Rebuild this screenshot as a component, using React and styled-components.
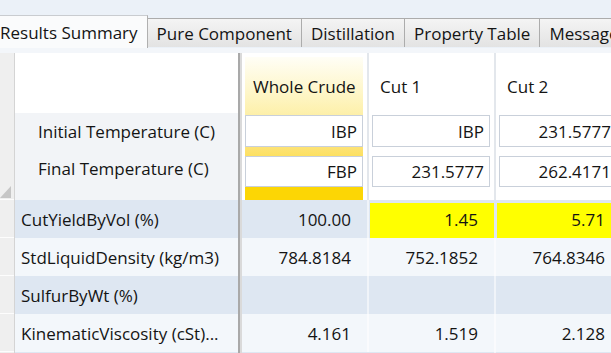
import styled, { createGlobalStyle, css } from "styled-components";

const GlobalStyle = createGlobalStyle`
  html, body {
    margin: 0;
    padding: 0;
    background: #ebf1f8;
    overflow: hidden;
  }
  body {
    font-family: "Open Sans", "Noto Sans", sans-serif;
    font-size: 17px;
    color: #141414;
  }
`;

const Page = styled.div`
  width: 611px;
  height: 353px;
  overflow: hidden;
  display: flex;
  flex-direction: column;
`;

const TabStrip = styled.div`
  display: flex;
  align-items: flex-end;
  height: 48px;
  margin-left: -9px;
  white-space: nowrap;
`;

const Tab = styled.div`
  height: 29px;
  padding: 0 9px;
  display: flex;
  align-items: center;
  box-sizing: border-box;
  border: 1px solid #acacac;
  border-bottom: none;
  border-left: none;
  background: linear-gradient(#f4f4f4, #e3e3e3);
  margin-bottom: 1px;
  ${(p) =>
    p.active &&
    css`
      height: 33px;
      margin-bottom: 0;
      background: #fafbfc;
      border-color: #c9ccd0;
      border-right-color: #b0b0b0;
    `}
`;

const Gap = styled.div`
  height: 5px;
  background: #f3f6fa;
`;

const Grid = styled.div`
  flex: 1;
  display: flex;
  flex-direction: column;
  overflow: hidden;
`;

const Row = styled.div`
  display: flex;
  height: ${(p) => p.h}px;
  flex-shrink: 0;
  background: ${(p) => p.bg};
`;

const RowHead = styled.div`
  width: 14px;
  flex-shrink: 0;
  background: #efefef;
  border-right: 1px solid #d4d4d4;
  box-shadow: inset 0 -1px 0 #fdfdfd;
  position: relative;
`;

const Corner = styled.div`
  position: absolute;
  right: 3px;
  bottom: 2px;
  width: 0;
  height: 0;
  border-left: 11px solid transparent;
  border-bottom: 12px solid #c6c6c6;
`;

const NameCol = styled.div`
  width: 223px;
  flex-shrink: 0;
  display: flex;
  flex-direction: column;
  background: #f2f4f7;
`;

const NameHead = styled.div`
  height: 60px;
  background: #ffffff;
`;

const TempLabel = styled.div`
  height: 37px;
  display: flex;
  align-items: center;
  padding-left: 23px;
  white-space: nowrap;
`;

const Splitter = styled.div`
  width: 4px;
  flex-shrink: 0;
  background: linear-gradient(to right, #a9a9a9 0 2px, #dadada 2px 4px);
`;

const ValueCol = styled.div`
  width: 118px;
  flex-shrink: 0;
  border-right: 2px solid #e3e7ec;
  background: #ffffff;
  padding: 4px 4px 0 3px;
  display: flex;
  flex-direction: column;
`;

const ValueInner = styled.div`
  flex: 1;
  display: flex;
  flex-direction: column;
  background: ${(p) =>
    p.whole
      ? "linear-gradient(#fffef6 0%, #fef6c8 25%, #fdeea0 45%, #fde37a 62%, #fcdc3c 80%, #fcd605 90%)"
      : "#ffffff"};
`;

const ColTitle = styled.div`
  height: 58px;
  display: flex;
  align-items: center;
  padding-left: 8px;
  white-space: nowrap;
`;

const InputBox = styled.div`
  height: ${(p) => p.h}px;
  box-sizing: border-box;
  border: 1px solid #c9d0da;
  background: #ffffff;
  display: flex;
  align-items: center;
  justify-content: flex-end;
  padding-right: 5px;
  margin-bottom: ${(p) => p.mb}px;
  white-space: nowrap;
`;

const NameCell = styled.div`
  width: 217px;
  flex-shrink: 0;
  padding-left: 6px;
  display: flex;
  align-items: center;
  white-space: nowrap;
  overflow: hidden;
`;

const Cell = styled.div`
  width: 109px;
  flex-shrink: 0;
  padding-right: 18px;
  display: flex;
  align-items: center;
  justify-content: flex-end;
  box-shadow: inset -2px 0 0 rgba(255, 255, 255, 0.55);
  ${(p) =>
    p.hl &&
    css`
      background: ${p.hl};
      box-shadow: inset 1px 3px 0 ${p.bg}, inset -2px 0 0 ${p.bg};
    `}
`;

const tabs = ["Results Summary", "Pure Component", "Distillation", "Property Table", "Messages"];

const columns = [
  { name: "Whole Crude", ibp: "IBP", fbp: "FBP", whole: true },
  { name: "Cut 1", ibp: "IBP", fbp: "231.5777" },
  { name: "Cut 2", ibp: "231.5777", fbp: "262.4171" },
];

const rows = [
  { label: "CutYieldByVol (%)", values: ["100.00", "1.45", "5.71"], hl: [null, "#ffff00", "#ffff00"] },
  { label: "StdLiquidDensity (kg/m3)", values: ["784.8184", "752.1852", "764.8346"] },
  { label: "SulfurByWt (%)", values: ["", "", ""] },
  { label: "KinematicViscosity (cSt)...", values: ["4.161", "1.519", "2.128"] },
  { label: "", values: ["", "", ""], hl: ["#fce03a", null, null] },
];

export default function App() {
  return (
    <Page>
      <GlobalStyle />
      <TabStrip>
        {tabs.map((t, i) => (
          <Tab key={t} active={i === 0}>
            {t}
          </Tab>
        ))}
      </TabStrip>
      <Gap />
      <Grid>
        <Row h={147} bg="#ffffff">
          <RowHead>
            <Corner />
          </RowHead>
          <NameCol>
            <NameHead />
            <TempLabel>Initial Temperature (C)</TempLabel>
            <TempLabel>Final Temperature (C)</TempLabel>
          </NameCol>
          <Splitter />
          {columns.map((c) => (
            <ValueCol key={c.name}>
              <ValueInner whole={c.whole}>
                <ColTitle>{c.name}</ColTitle>
                <InputBox h={32} mb={9}>
                  {c.ibp}
                </InputBox>
                <InputBox h={31} mb={0}>
                  {c.fbp}
                </InputBox>
              </ValueInner>
            </ValueCol>
          ))}
        </Row>
        {rows.map((r, i) => {
          const bg = i % 2 === 0 ? "#dee7f2" : "#f3f7fb";
          return (
            <Row key={i} h={38} bg={bg}>
              <RowHead />
              <NameCell>{r.label}</NameCell>
              <Splitter />
              {r.values.map((v, j) => (
                <Cell key={j} bg={bg} hl={r.hl && r.hl[j]}>
                  {v}
                </Cell>
              ))}
            </Row>
          );
        })}
      </Grid>
    </Page>
  );
}
